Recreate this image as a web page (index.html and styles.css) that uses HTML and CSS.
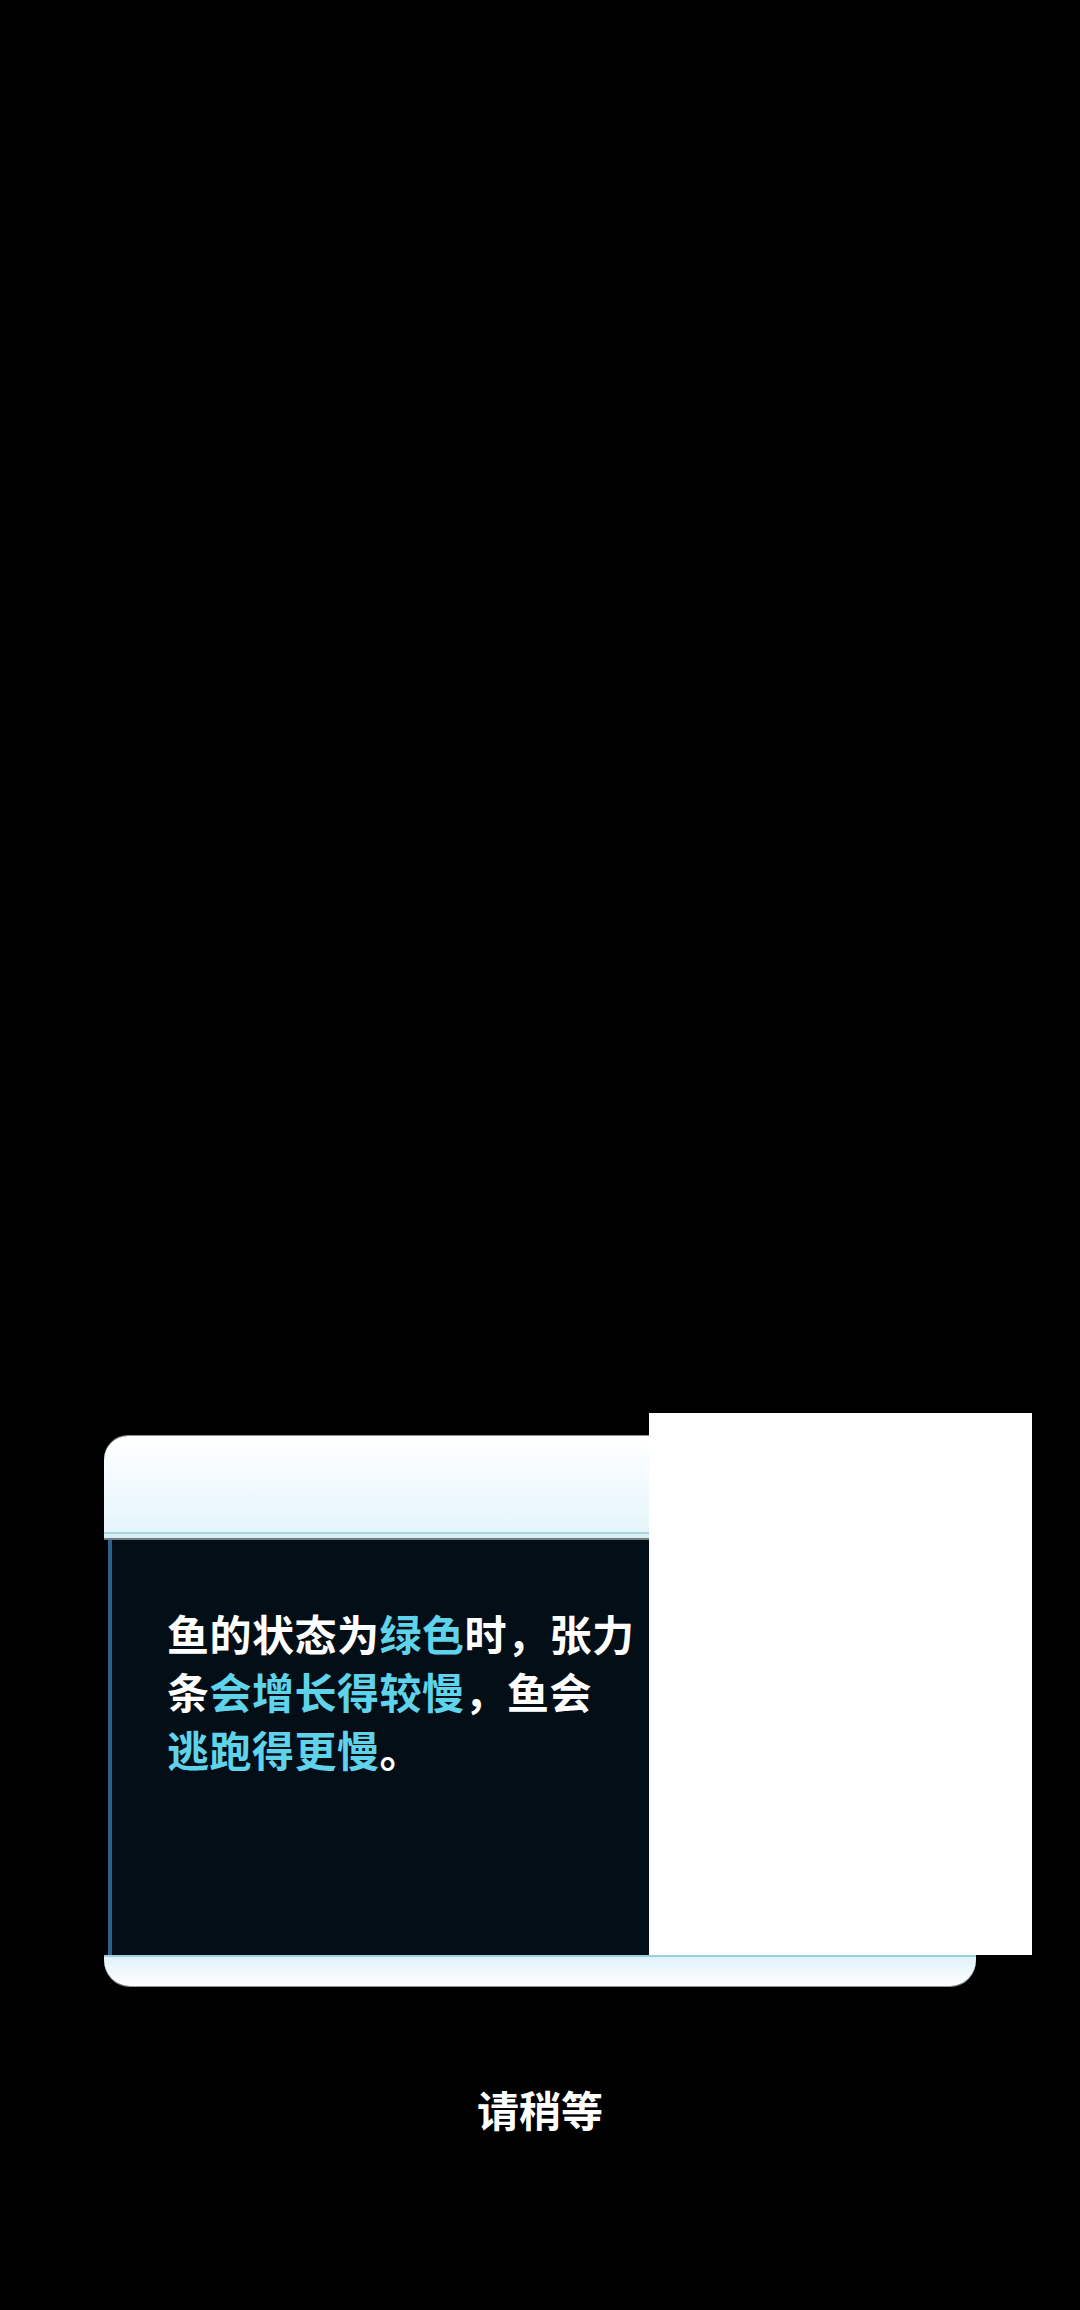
FILE: index.html
```html
<!DOCTYPE html>
<html lang="zh-CN">

<head>
    <meta charset="UTF-8">
    <meta name="viewport" content="width=device-width, initial-scale=1.0">
    <title>请稍等</title>
    <link rel="stylesheet" href="styles.css">
</head>

<body>
    <div class="screen">
        <div class="tip-card">
            <div class="tip-head"></div>
            <div class="tip-rule"></div>
            <div class="tip-body">
                <p class="tip-text">
                    鱼的状态为<span class="hl">绿色</span>时，张力<br>条<span class="hl">会增长得较慢</span>，鱼会<br><span class="hl">逃跑得更慢</span>。
                </p>
            </div>
            <div class="tip-foot"></div>
        </div>

        <p class="wait">请稍等</p>

        <!-- video frame still loading -->
        <div class="frame-blank"></div>
    </div>
</body>

</html>
```

FILE: styles.css
```css
html,
body {
    margin: 0;
    background: #000;
}

body {
    font-family: "Noto Sans CJK SC", "Noto Sans", sans-serif;
    color: #fff;
}

.screen {
    position: relative;
    width: 1080px;
    height: 2310px;
    padding-top: 1436px;
    box-sizing: border-box;
}

.tip-card {
    width: 872px;
    margin: 0 auto;
}

.tip-head {
    height: 96px;
    border-radius: 24px 24px 0 0;
    background: linear-gradient(#ffffff, #e5f5fc);
    box-shadow: 0 -1px 0 #8a9499;
}

.tip-rule {
    height: 8px;
    background: linear-gradient(#a6d7e3 0 2px, #dcedf2 2px 6px, #6f7f86 6px 8px);
}

.tip-body {
    height: 415px;
    margin-left: 4px;
    border-left: 4px solid #2d5f8f;
    background: #030e17;
    padding: 64px 40px 0 55px;
    box-sizing: border-box;
}

.tip-text {
    margin: 0;
    white-space: nowrap;
    font-size: 42px;
    font-weight: 700;
    line-height: 58px;
    letter-spacing: 0.5px;
}

.hl {
    color: #5fd3ea;
}

.tip-foot {
    height: 31px;
    border-radius: 0 0 26px 26px;
    background: linear-gradient(#9ccfdc 0 2px, #dff2f9 2px, #ffffff);
    box-shadow: 0 1px 0 #8a9499;
}

.wait {
    margin: 94px 0 0;
    text-align: center;
    font-size: 42px;
    font-weight: 700;
    line-height: 58px;
}

.frame-blank {
    position: absolute;
    left: 649px;
    top: 1413px;
    width: 383px;
    height: 542px;
    background: #fff;
}
```
